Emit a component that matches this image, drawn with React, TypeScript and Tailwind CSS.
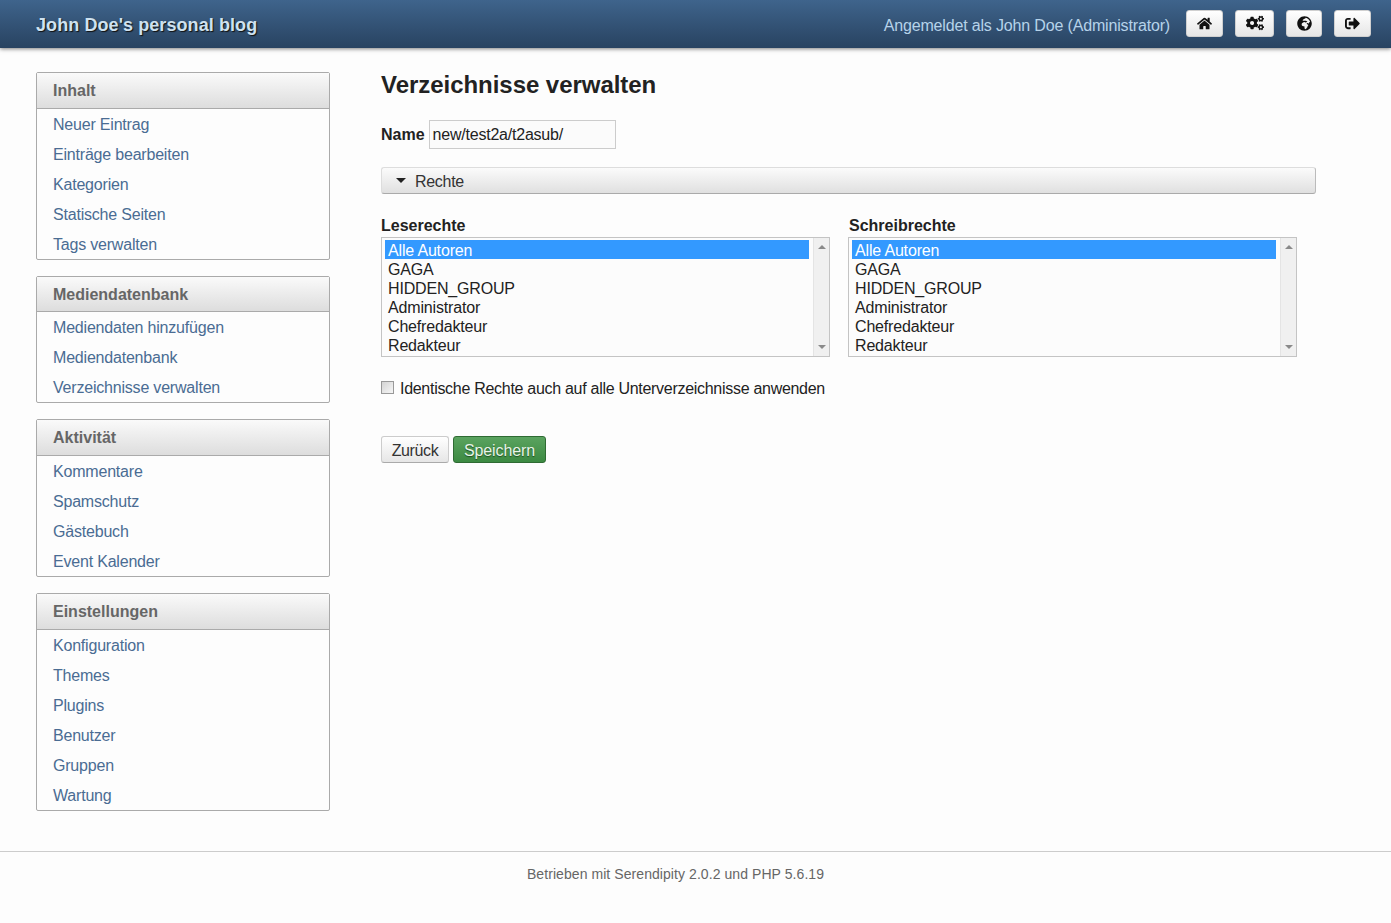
import React from "react";
import { FaHome, FaCogs, FaGlobeAfrica, FaSignOutAlt } from "react-icons/fa";

const menus = [
    { title: "Inhalt", items: ["Neuer Eintrag", "Einträge bearbeiten", "Kategorien", "Statische Seiten", "Tags verwalten"] },
    { title: "Mediendatenbank", items: ["Mediendaten hinzufügen", "Mediendatenbank", "Verzeichnisse verwalten"] },
    { title: "Aktivität", items: ["Kommentare", "Spamschutz", "Gästebuch", "Event Kalender"] },
    { title: "Einstellungen", items: ["Konfiguration", "Themes", "Plugins", "Benutzer", "Gruppen", "Wartung"] },
];

const groups = ["Alle Autoren", "GAGA", "HIDDEN_GROUP", "Administrator", "Chefredakteur", "Redakteur"];

const iconButtons = [
    { icon: <FaHome size={15} />, width: "w-[37px]" },
    { icon: <FaCogs size={18} />, width: "w-[39px]" },
    { icon: <FaGlobeAfrica size={15} />, width: "w-[36px]" },
    { icon: <FaSignOutAlt size={15} />, width: "w-[37px]" },
];

const ListBox: React.FC<{ label: string; labelClass?: string }> = ({ label, labelClass }) => (
    <div className="w-[449px]">
        <div className={`h-[21px] font-bold leading-[20px] text-[#222] ${labelClass ?? ""}`}>{label}</div>
        <div className="flex h-[120px] border border-[#c4c4c4] bg-[#fcfcfc]">
            <div className="flex-1 pl-[3px] pr-[4px] pt-[2px] leading-[21px] tracking-[-0.17px] text-[#222]">
                {groups.map((group, index) => (
                    <div key={group} className={index === 0 ? "h-[19px] bg-[#3399ff] pl-[3px] text-white" : "h-[19px] pl-[3px]"}>{group}</div>
                ))}
            </div>
            <div className="flex w-[16px] flex-col items-center justify-between border-l border-[#e4e4e4] bg-[#f0f0f0] py-[7px]">
                <span className="h-0 w-0 border-x-[4px] border-b-[4px] border-x-transparent border-b-[#8a8a8a]"></span>
                <span className="h-0 w-0 border-x-[4px] border-t-[4px] border-x-transparent border-t-[#8a8a8a]"></span>
            </div>
        </div>
    </div>
);

const App: React.FC = () => {
    return (
        <div className="min-h-[923px] bg-[#fdfdfd] font-['Liberation_Sans',Arial,sans-serif] text-base">
            <header className="flex h-[48px] items-center justify-between bg-gradient-to-b from-[#3f648c] to-[#284361] pl-[36px] pr-[20px] shadow-[0_1px_4px_rgba(0,0,0,0.5)]">
                <div className="pt-[2px] text-lg font-bold tracking-[0.08px] text-[#cfe2f0] [text-shadow:1px_1px_1px_#111]">John Doe's personal blog</div>
                <div className="flex items-center">
                    <span className="mr-[16px] pt-[3px] tracking-[-0.16px] text-[#b6d3ea]">Angemeldet als John Doe (Administrator)</span>
                    <div className="flex gap-[12px] pb-[2px]">
                        {iconButtons.map((button, index) => (
                            <button key={index} className={`flex h-[27px] ${button.width} items-center justify-center rounded-[3px] border border-[#d0d0d0] bg-gradient-to-b from-white to-[#e6e6e6] text-[#111]`}>
                                {button.icon}
                            </button>
                        ))}
                    </div>
                </div>
            </header>

            <div className="flex pl-[36px] pt-[24px]">
                <nav className="flex w-[294px] flex-col gap-[16px]">
                    {menus.map((menu) => (
                        <section key={menu.title} className="rounded-[2px] border border-[#aaaaaa] bg-[#fdfdfd]">
                            <h3 className="flex h-[35.7px] items-center border-b border-[#aaaaaa] bg-gradient-to-b from-[#fafafa] to-[#dddddd] pl-[16px] pt-[1px] font-bold text-[#666]">{menu.title}</h3>
                            <ul>
                                {menu.items.map((item) => (
                                    <li key={item} className="flex h-[30px] items-center pl-[16px] pt-[2px] tracking-[-0.2px] text-[#4a6c93]">{item}</li>
                                ))}
                            </ul>
                        </section>
                    ))}
                </nav>

                <main className="ml-[51px] w-[935px]">
                    <h2 className="text-2xl font-bold leading-[26px] tracking-[-0.04px] text-[#222]">Verzeichnisse verwalten</h2>

                    <div className="mt-[22px] flex items-center text-[#222]">
                        <label className="font-bold">Name</label>
                        <div className="ml-[4px] flex h-[29px] w-[187px] items-center border border-[#cccccc] bg-[#fbfbfb] pl-[3px] tracking-[-0.22px]">new/test2a/t2asub/</div>
                    </div>

                    <div className="mt-[18px] flex h-[27px] items-center rounded-[3px] border border-[#dddddd] border-b-[#aaaaaa] border-r-[#bbbbbb] bg-gradient-to-b from-[#fbfbfb] to-[#e0e0e0] pl-[14px] text-[#333]">
                        <span className="h-0 w-0 border-x-[5px] border-t-[5px] border-x-transparent border-t-[#222]"></span>
                        <span className="ml-[9px] pt-[2px] tracking-[-0.3px]">Rechte</span>
                    </div>

                    <div className="mt-[22px] flex gap-[18px]">
                        <ListBox label="Leserechte" />
                        <ListBox label="Schreibrechte" labelClass="pl-px" />
                    </div>

                    <div className="mt-[20px] flex items-center text-[#222]">
                        <span className="mb-[3px] h-[13px] w-[13px] border border-[#999] bg-gradient-to-br from-[#d4d4d4] to-[#f6f6f6]"></span>
                        <span className="ml-[6px] tracking-[-0.29px]">Identische Rechte auch auf alle Unterverzeichnisse anwenden</span>
                    </div>

                    <div className="mt-[35px] flex gap-[4px]">
                        <button className="h-[27px] w-[68px] rounded-[3px] border border-[#cccccc] border-b-[#aaaaaa] bg-gradient-to-b from-[#ffffff] to-[#e6e6e6] pt-[2px] tracking-[-0.4px] text-[#333]">Zurück</button>
                        <button className="h-[27px] w-[93px] rounded-[3px] border border-[#2f6b33] bg-gradient-to-b from-[#5aa35f] to-[#3c8a42] pt-[2px] tracking-[-0.1px] text-[#e8f4e8] [text-shadow:0_1px_1px_#1d4d20]">Speichern</button>
                    </div>
                </main>
            </div>

            <footer className="mt-[40px] border-t border-[#cccccc] pr-[40px] pt-[12px] text-center text-sm tracking-[0.07px] text-[#666]">
                Betrieben mit Serendipity 2.0.2 und PHP 5.6.19
            </footer>
        </div>
    );
};

export default App;
